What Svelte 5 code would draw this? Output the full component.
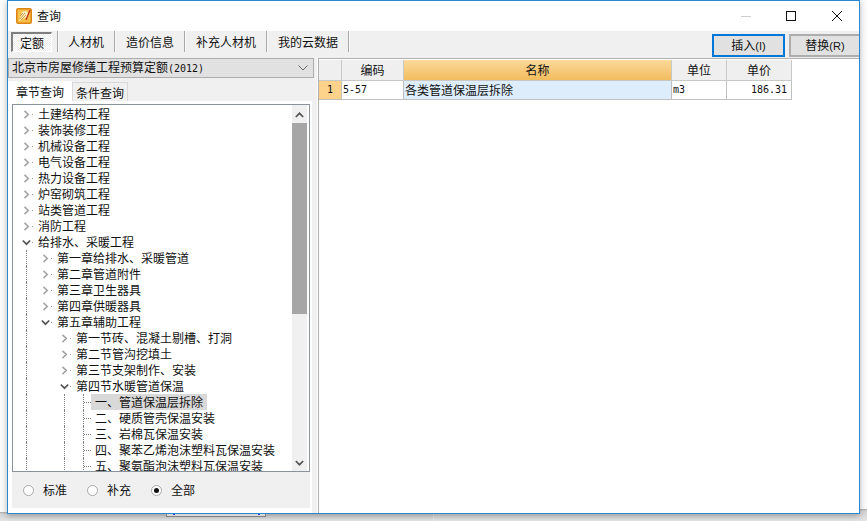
<script lang="ts">
  type Row = { label: string; level: number; state?: 'open' | 'closed' | 'leaf'; selected?: boolean };

  const rows: Row[] = [
    { label: '土建结构工程', level: 0, state: 'closed' },
    { label: '装饰装修工程', level: 0, state: 'closed' },
    { label: '机械设备工程', level: 0, state: 'closed' },
    { label: '电气设备工程', level: 0, state: 'closed' },
    { label: '热力设备工程', level: 0, state: 'closed' },
    { label: '炉窑砌筑工程', level: 0, state: 'closed' },
    { label: '站类管道工程', level: 0, state: 'closed' },
    { label: '消防工程', level: 0, state: 'closed' },
    { label: '给排水、采暖工程', level: 0, state: 'open' },
    { label: '第一章给排水、采暖管道', level: 1, state: 'closed' },
    { label: '第二章管道附件', level: 1, state: 'closed' },
    { label: '第三章卫生器具', level: 1, state: 'closed' },
    { label: '第四章供暖器具', level: 1, state: 'closed' },
    { label: '第五章辅助工程', level: 1, state: 'open' },
    { label: '第一节砖、混凝土剔槽、打洞', level: 2, state: 'closed' },
    { label: '第二节管沟挖填土', level: 2, state: 'closed' },
    { label: '第三节支架制作、安装', level: 2, state: 'closed' },
    { label: '第四节水暖管道保温', level: 2, state: 'open' },
    { label: '一、管道保温层拆除', level: 3, state: 'leaf', selected: true },
    { label: '二、硬质管壳保温安装', level: 3, state: 'leaf' },
    { label: '三、岩棉瓦保温安装', level: 3, state: 'leaf' },
    { label: '四、聚苯乙烯泡沫塑料瓦保温安装', level: 3, state: 'leaf' },
    { label: '五、聚氨酯泡沫塑料瓦保温安装', level: 3, state: 'leaf' }
  ];

  const tools = ['人材机', '造价信息', '补充人材机', '我的云数据'];
  const scopes = ['标准', '补充', '全部'];
</script>

<div class="desktop">
  <div class="window">
    <header class="titlebar">
      <svg class="app-icon" width="16" height="16" viewBox="0 0 16 16">
        <rect x="0.75" y="0.75" width="14.5" height="14.5" rx="1.5" fill="#f7c04a" stroke="#dd8410" stroke-width="1.5" />
        <path d="M3 13 L6 4 L10 3 L12 5 L11 9 Z" fill="#fdf0c8" />
        <path d="M4 11 L9 5 M5 12 L10 7 M4 8 L7 5" stroke="#d99a3a" stroke-width="1" fill="none" />
        <path d="M10 12 L14 2" stroke="#c0391b" stroke-width="1.4" />
      </svg>
      <span class="title">查询</span>
      <div class="controls">
        <svg width="10" height="10" viewBox="0 0 10 10" class="min"><path d="M0 5.5H10" stroke="#cccccc" /></svg>
        <svg width="10" height="10" viewBox="0 0 10 10" class="max"><rect x="0.5" y="0.5" width="9" height="9" fill="none" stroke="#111" /></svg>
        <svg width="10" height="10" viewBox="0 0 10 10" class="close"><path d="M0 0L10 10M10 0L0 10" stroke="#111" /></svg>
      </div>
    </header>

    <div class="toolbar">
      <button class="tool pressed">定额</button>
      <i class="sep"></i>
      {#each tools as tool, i}
        <button class="tool" class:first={i === 0}>{tool}</button>
        <i class="sep"></i>
      {/each}
      <div class="actions">
        <button class="action focus">插入<span class="key">(I)</span></button>
        <button class="action">替换<span class="key">(R)</span></button>
      </div>
    </div>

    <div class="body">
      <aside class="left">
        <div class="combo">
          <span>北京市房屋修缮工程预算定额<span class="paren">(2012)</span></span>
          <svg width="10" height="6" viewBox="0 0 10 6"><path d="M0.5 0.5L5 5L9.5 0.5" fill="none" stroke="#666" /></svg>
        </div>
        <div class="tabs">
          <span class="tab active">章节查询</span>
          <span class="tab">条件查询</span>
        </div>
        <div class="page">
          <div class="tree">
            <div class="rows">
              {#each rows as row}
                <div class="row level-{row.level}">
                  {#if row.level > 0}<i class="guide g0"></i>{/if}
                  {#if row.level === 3}<i class="guide g2"></i><i class="guide g3"></i><i class="stub"></i>{/if}
                  {#if row.state !== 'leaf'}
                    <svg class="chev" width="9" height="9" viewBox="0 0 9 9">
                      {#if row.state === 'open'}
                        <path d="M0.8 2.5L4.5 6.2L8.2 2.5" fill="none" stroke="#555" stroke-width="1.7" />
                      {:else}
                        <path d="M2.5 0.8L6.2 4.5L2.5 8.2" fill="none" stroke="#a6a6a6" stroke-width="1.7" />
                      {/if}
                    </svg>
                    <i class="dot"></i>
                  {/if}
                  <span class="label" class:selected={row.selected}>{row.label}</span>
                </div>
              {/each}
            </div>
            <div class="scrollbar">
              <svg width="9" height="6" viewBox="0 0 9 6"><path d="M0.8 5L4.5 1.3L8.2 5" fill="none" stroke="#555" stroke-width="1.7" /></svg>
              <div class="thumb-track"><div class="thumb"></div></div>
              <svg width="9" height="6" viewBox="0 0 9 6"><path d="M0.8 1L4.5 4.7L8.2 1" fill="none" stroke="#555" stroke-width="1.7" /></svg>
            </div>
          </div>
          <div class="scopes">
            {#each scopes as scope, i}
              <label class="scope">
                <span class="radio" class:on={i === 2}></span>
                {scope}
              </label>
            {/each}
          </div>
        </div>
      </aside>

      <main class="right">
        <div class="grid">
          <div class="cell head"></div>
          <div class="cell head">编码</div>
          <div class="cell head current">名称</div>
          <div class="cell head">单位</div>
          <div class="cell head">单价</div>

          <div class="cell index">1</div>
          <div class="cell mono">5-57</div>
          <div class="cell name">各类管道保温层拆除</div>
          <div class="cell mono">m3</div>
          <div class="cell mono num">186.31</div>
        </div>
      </main>
    </div>
  </div>
  <div class="behind"></div>
</div>

<style>
  :global(body) {
    margin: 0;
    background: #fbfbfb;
  }
  .desktop {
    position: relative;
    width: 867px;
    height: 521px;
    overflow: hidden;
    font-family: "Noto Sans CJK SC", "Liberation Sans", sans-serif;
    font-size: 12px;
    line-height: 16px;
    color: #111;
    background:
      linear-gradient(#fbfbfb 0, #fbfbfb 512px, #a8a8a8 512px, #d4d4d4 514px, #e4e4e4 521px) 0 0 / 50% 100% no-repeat,
      linear-gradient(#fbfbfb 0, #fbfbfb 509px, #a8a8a8 509px, #d4d4d4 511px, #e4e4e4 521px) 100% 0 / 50% 100% no-repeat;
  }
  .window {
    position: relative;
    z-index: 1;
    margin-left: 7px;
    width: 851px;
    height: 512px;
    border: 1px solid #2b87d1;
    background: #fff;
    display: flex;
    flex-direction: column;
    box-shadow: 0 2px 6px rgba(0, 0, 0, 0.28);
  }
  .behind {
    position: absolute;
    left: 166px;
    top: 512px;
    width: 98px;
    height: 3px;
    border: 1px solid #808080;
    background:
      linear-gradient(#1f3fc4, #1f3fc4) 6px 1px / 2px 1px no-repeat,
      linear-gradient(#1f3fc4, #1f3fc4) 91px 1px / 2px 1px no-repeat,
      #d8d8d8;
    z-index: 2;
    clip-path: inset(2px 0 0 0);
  }

  .titlebar {
    height: 30px;
    flex: none;
    display: flex;
    align-items: center;
    padding-left: 8px;
    background: #fff;
  }
  .app-icon { margin-right: 5px; }
  .controls {
    margin-left: auto;
    display: flex;
    align-items: center;
  }
  .controls .min { margin-right: 35px; }
  .controls .max { margin-right: 36px; }
  .controls .close { margin-right: 17px; }

  .toolbar {
    height: 27px;
    flex: none;
    display: flex;
    align-items: flex-start;
    padding-left: 3px;
    background: #f0f0f0;
  }
  .tool {
    font: inherit;
    color: inherit;
    height: 21px;
    margin-top: 0;
    padding: 0 10px;
    border: 0;
    background: none;
    white-space: nowrap;
  }
  .tool.first { padding-left: 9px; }
  .tool.pressed {
    width: 41px;
    height: 20px;
    margin: 1px 0 0;
    padding: 0;
    border: 1px solid #fff;
    border-top: 2px solid #7f7f7f;
    border-left: 2px solid #7f7f7f;
    background: repeating-conic-gradient(#fff 0 25%, #ececec 0 50%) 0 0 / 2px 2px;
  }
  .sep {
    width: 2px;
    height: 21px;
    background: linear-gradient(90deg, #a8a8a8 50%, #fafafa 50%);
    flex: none;
  }
  .tool.pressed + .sep { margin-left: 5px; }
  .actions {
    margin-left: auto;
    display: flex;
    gap: 4px;
    margin-top: 3px;
  }
  .action {
    font: inherit;
    color: #111;
    width: 73px;
    height: 23px;
    padding: 0;
    border: 2px solid #adadad;
    background: #e1e1e1;
  }
  .action:last-child {
    width: 70px;
    border-right-width: 0;
  }
  .action.focus { border-color: #0078d7; }
  .key {
    font-family: "Liberation Sans", sans-serif;
    font-size: 11px;
  }

  .body {
    flex: 1;
    display: flex;
    min-height: 0;
  }
  .left {
    width: 309px;
    flex: none;
    background: #f0f0f0;
    display: flex;
    flex-direction: column;
  }
  .combo {
    height: 18px;
    margin: 0 3px 0 0;
    padding: 0 5px 0 3px;
    border: 1px solid #adadad;
    background: #e1e1e1;
    display: flex;
    align-items: center;
    justify-content: space-between;
  }
  .paren {
    font-family: "DejaVu Sans Mono", monospace;
    font-size: 10px;
  }
  .tabs {
    display: flex;
    align-items: flex-end;
    height: 21px;
    margin-top: 2px;
  }
  .tab {
    box-sizing: border-box;
    width: 56px;
    height: 19px;
    text-align: center;
    line-height: 19px;
    background: #f0f0f0;
    border: 1px solid #d9d9d9;
    border-bottom: 0;
  }
  .tab.active {
    width: 64px;
    height: 20px;
    line-height: 21px;
    background: #fff;
    border: 0;
  }
  .page {
    flex: 1;
    min-height: 0;
    width: 298px;
    background: #f0f0f0;
    border: solid #fff;
    border-width: 3px 2px 5px 4px;
    display: flex;
    flex-direction: column;
  }
  .tree {
    height: 366px;
    flex: none;
    border: 1px solid #8a929c;
    background: #fff;
    display: flex;
    overflow: hidden;
  }
  .rows {
    flex: 1;
    min-width: 0;
    padding-top: 1px;
  }
  .row {
    position: relative;
    height: 16px;
    display: flex;
    align-items: center;
    white-space: nowrap;
  }
  .level-0 { padding-left: 9px; }
  .level-1 { padding-left: 28px; }
  .level-2 { padding-left: 47px; }
  .level-3 { padding-left: 82px; }
  .chev { flex: none; margin-right: 1px; }
  .dot {
    width: 1px;
    height: 1px;
    background: #999;
    margin-right: 5px;
    flex: none;
  }
  .label { padding: 0 4px 0 0; }
  .label.selected {
    background: #d9d9d9;
    margin-left: -4px;
    padding-left: 4px;
    padding-right: 4px;
  }
  .guide {
    position: absolute;
    top: 0;
    bottom: 0;
    border-left: 1px dotted #808080;
  }
  .g0 { left: 13px; }
  .g2 { left: 51px; }
  .g3 { left: 70px; }
  .stub {
    position: absolute;
    left: 71px;
    top: 8px;
    width: 7px;
    border-top: 1px dotted #808080;
  }

  .scrollbar {
    width: 15px;
    flex: none;
    margin: 0 2px 0 0;
    background: #f0f0f0;
    display: flex;
    flex-direction: column;
    align-items: center;
    justify-content: space-between;
    padding: 7px 0 5px;
    box-sizing: border-box;
    position: relative;
  }
  .thumb-track {
    position: absolute;
    inset: 18px 0 17px 0;
  }
  .thumb {
    height: 191px;
    background: #a6a6a6;
  }

  .scopes {
    flex: 1;
    display: flex;
    align-items: center;
    padding: 0 0 0 11px;
    gap: 24px;
  }
  .scope {
    display: flex;
    align-items: center;
    gap: 9px;
    width: 40px;
    white-space: nowrap;
  }
  .radio {
    box-sizing: border-box;
    width: 11px;
    height: 11px;
    border: 1px solid #a8a8a8;
    border-radius: 50%;
    background: #fff;
    display: flex;
    align-items: center;
    justify-content: center;
    flex: none;
  }
  .radio.on::after {
    content: "";
    width: 5px;
    height: 5px;
    border-radius: 50%;
    background: #111;
  }

  .right {
    flex: 1;
    min-width: 0;
    margin-left: 1px;
    border: solid #b0b0b0;
    border-width: 1px 0 0 1px;
    background: #fff;
    padding-top: 1px;
  }
  .grid {
    display: grid;
    grid-template-columns: 23px 62px 268px 55px 65px;
    grid-template-rows: 21px 19px;
    width: max-content;
  }
  .cell {
    box-sizing: border-box;
    border: solid #c0c0c0;
    border-width: 0 1px 1px 0;
    display: flex;
    align-items: center;
    padding: 0 1px;
    white-space: nowrap;
  }
  .head {
    justify-content: center;
    background: #efefef;
    border-color: #c8c8c8;
  }
  .current {
    background: linear-gradient(#fbd99a, #f2bc5e);
  }
  .index {
    justify-content: center;
    background: #fdd38c;
    font-family: "DejaVu Sans Mono", monospace;
    font-size: 10px;
  }
  .name { background: #deedfb; }
  .mono {
    font-family: "DejaVu Sans Mono", monospace;
    font-size: 10px;
  }
  .num {
    justify-content: flex-end;
    padding-right: 4px;
  }
</style>
